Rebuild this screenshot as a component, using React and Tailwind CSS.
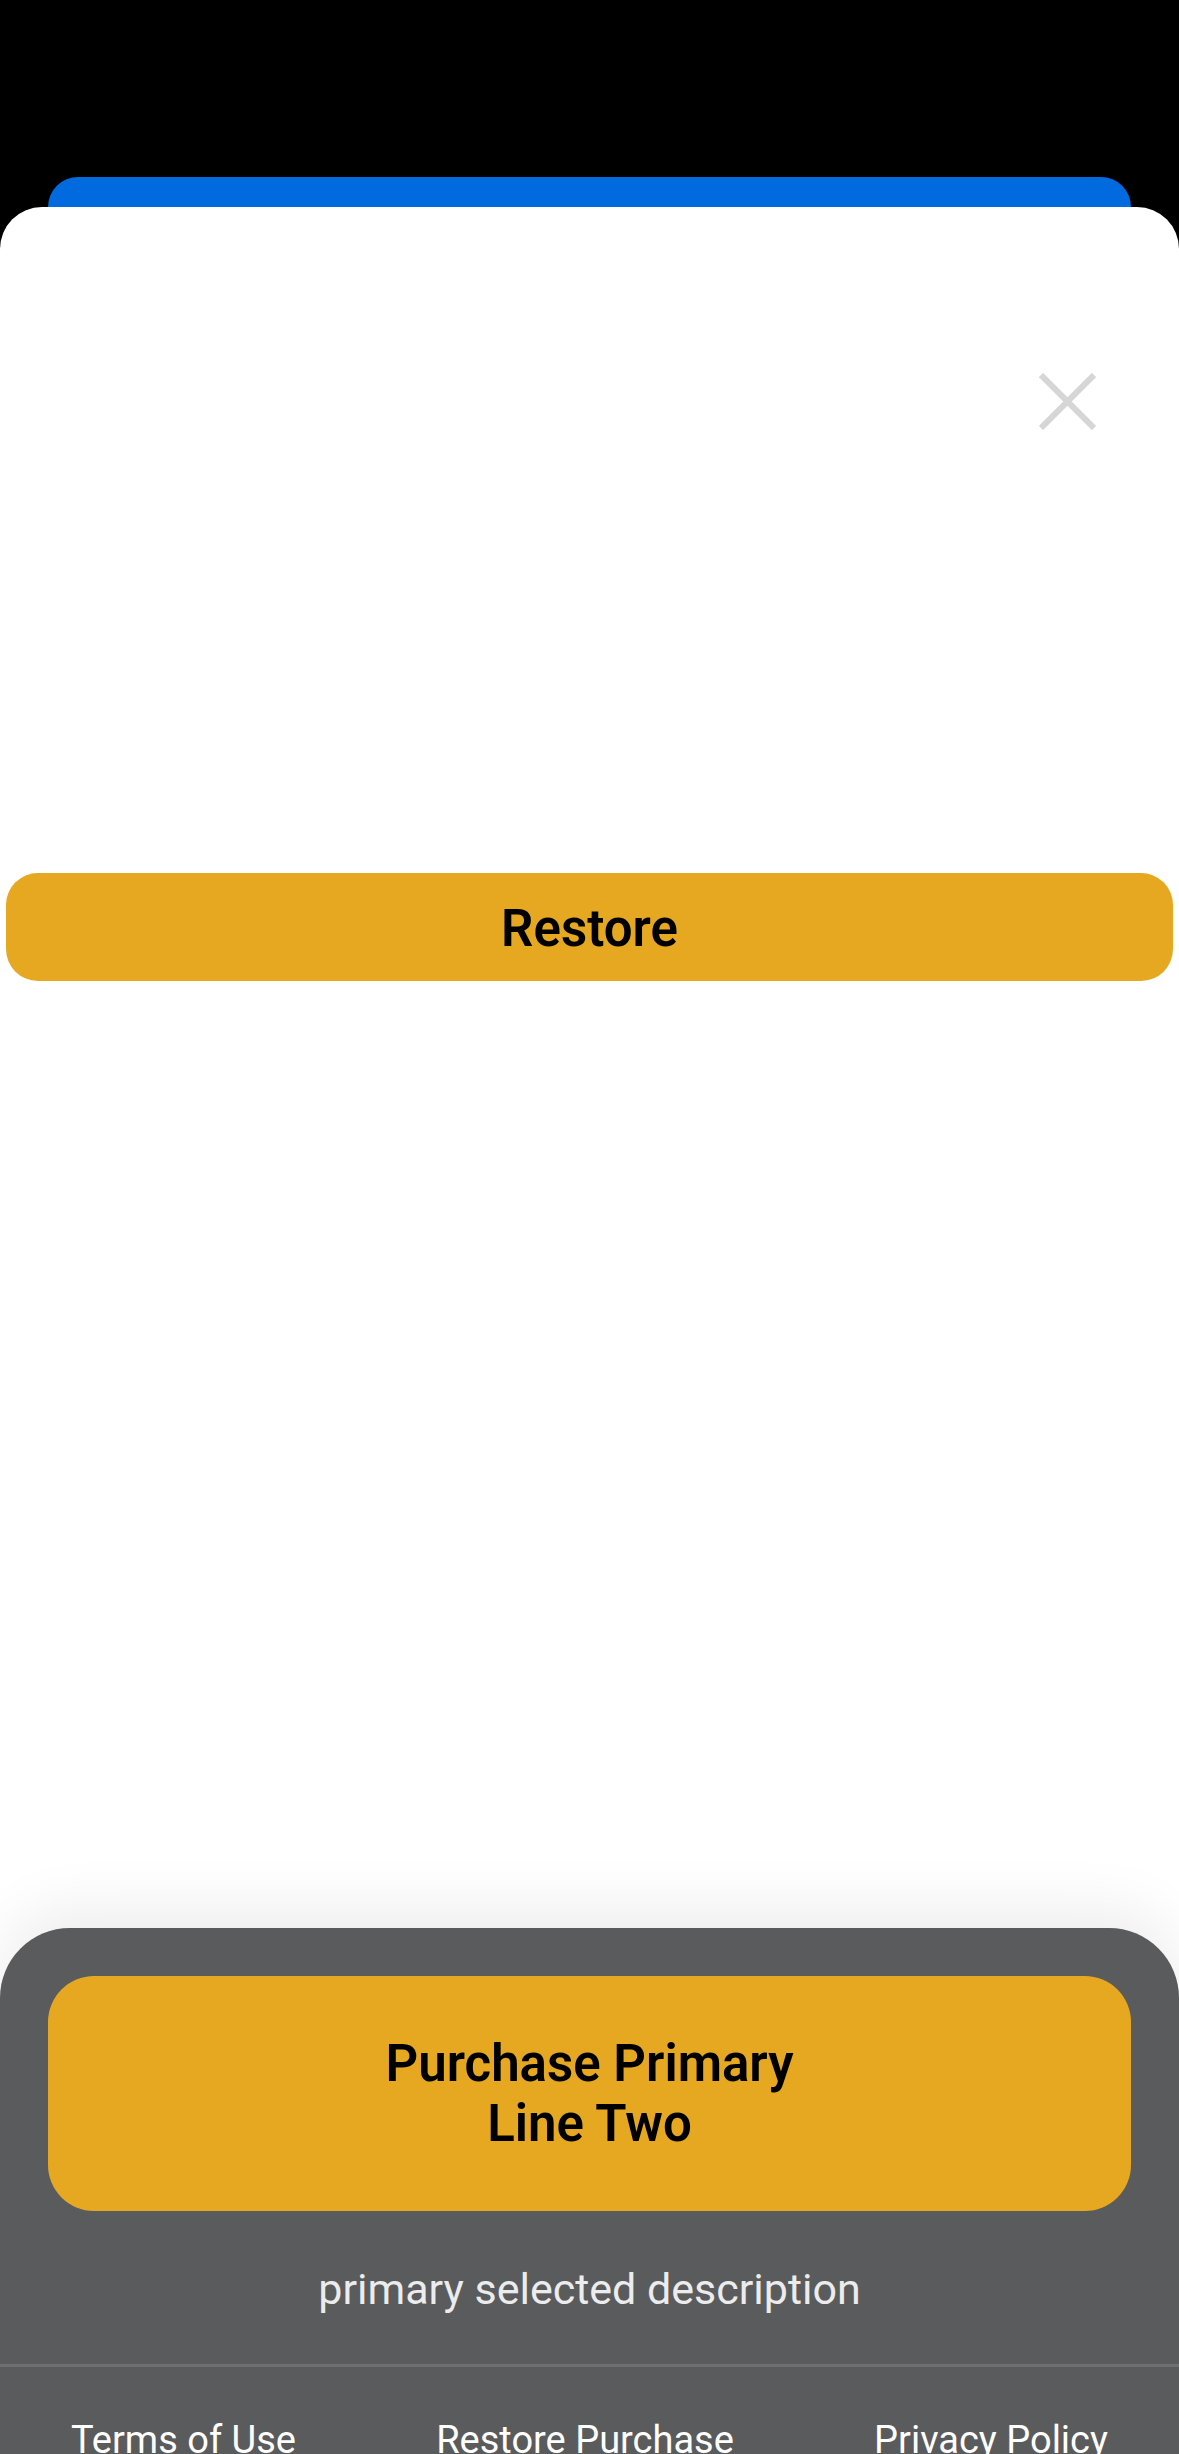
export default function App() {
  return (
    <div
      className="h-[2454px] w-full overflow-hidden bg-black flex flex-col pt-[177px]"
      style={{ fontFamily: 'Roboto, "Liberation Sans", sans-serif' }}
    >
      <div className="mx-[48px] h-[60px] shrink-0 rounded-t-[30px] bg-[#006ade]" />
      <div className="-mt-[30px] flex-1 flex flex-col bg-white rounded-t-[42px] overflow-hidden">
        <div className="flex justify-end pt-[166px] pr-[83px]">
          <svg width="57" height="57" viewBox="0 0 57 57" aria-label="Close">
            <line x1="2" y1="2" x2="55" y2="55" stroke="#d6d6d6" strokeWidth="6" />
            <line x1="55" y1="2" x2="2" y2="55" stroke="#d6d6d6" strokeWidth="6" />
          </svg>
        </div>
        <button className="mt-[443px] mx-[6px] h-[108px] shrink-0 rounded-[32px] bg-[#e5a820] text-black text-[51px] leading-[60px] font-semibold flex items-center justify-center pt-[4px]">
          Restore
        </button>
        <div className="flex-1" />
        <div className="h-[526px] shrink-0 bg-[#5a5b5d] rounded-t-[70px] shadow-[0_-20px_60px_rgba(0,0,0,0.07)]">
          <div className="pt-[48px] px-[48px]">
            <button className="w-full h-[235px] rounded-[46px] bg-[#e5a820] text-black text-[51px] leading-[60px] font-semibold flex items-center justify-center text-center">
              Purchase Primary
              <br />
              Line Two
            </button>
          </div>
          <p className="mt-[53px] text-center text-[43px] leading-[50px] text-[#ececec]">
            primary selected description
          </p>
          <div className="mt-[50px] h-[3px] bg-[#6e6f71]" />
          <div className="mt-[50px] flex justify-between px-[71px] text-[38px] leading-[46px] text-white">
            <span>Terms of Use</span>
            <span>Restore Purchase</span>
            <span>Privacy Policy</span>
          </div>
        </div>
      </div>
    </div>
  );
}
